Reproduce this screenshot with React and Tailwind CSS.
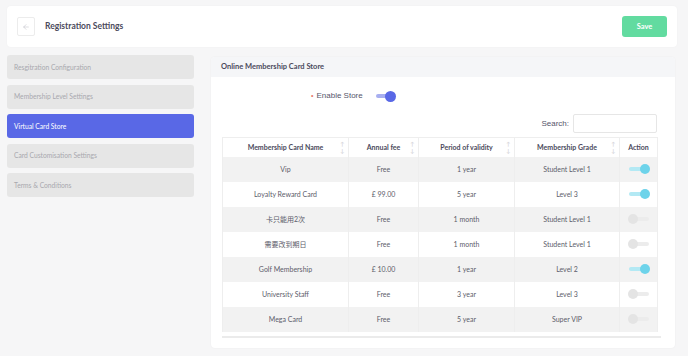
import React from 'react';
import { ArrowLeft } from 'lucide-react';

const menu = [
  { label: 'Resgitration Configuration' },
  { label: 'Membership Level Settings' },
  { label: 'Virtual Card Store', active: true },
  { label: 'Card Customisation Settings' },
  { label: 'Terms & Conditions' },
];

const cards = [
  { name: 'Vip', fee: 'Free', period: '1 year', grade: 'Student Level 1', on: true },
  { name: 'Loyalty Reward Card', fee: '£ 99.00', period: '5 year', grade: 'Level 3', on: true },
  { name: '卡只能用2次', fee: 'Free', period: '1 month', grade: 'Student Level 1', on: false },
  { name: '需要改到期日', fee: 'Free', period: '1 month', grade: 'Student Level 1', on: false },
  { name: 'Golf Membership', fee: '£ 10.00', period: '1 year', grade: 'Level 2', on: true },
  { name: 'University Staff', fee: 'Free', period: '3 year', grade: 'Level 3', on: false },
  { name: 'Mega Card', fee: 'Free', period: '5 year', grade: 'Super VIP', on: false },
];

function SortArrows() {
  return (
    <span className="absolute right-[4px] top-[3px] flex flex-col text-[5.5px] leading-[7px] text-[#d6d6da]">
      <span>↑</span>
      <span>↓</span>
    </span>
  );
}

function RowToggle({ on }) {
  return (
    <div className="relative w-[22px] h-[10px] mx-auto">
      <div className={`absolute left-[1px] right-[1px] top-[3px] h-[4px] rounded-full ${on ? 'bg-[#b3e9f4]' : 'bg-[#ececec]'}`}></div>
      <div className={`absolute top-0 w-[10px] h-[10px] rounded-full ${on ? 'right-0 bg-[#6dd3ea]' : 'left-0 bg-[#e4e4e4]'}`}></div>
    </div>
  );
}

export default function App() {
  return (
    <div className="min-h-[356px] bg-[#f6f6f7] pt-[6px] pl-[7px] font-['Lato',sans-serif] text-[#4b4a5c]">
      <div className="w-[670px]">
        {/* header */}
        <div className="h-[41px] bg-white rounded-[4px] flex items-center justify-between pl-[10px] pr-[10px] shadow-[0_0_2px_rgba(0,0,0,0.04)]">
          <div className="flex items-center gap-[10px]">
            <div className="w-[18px] h-[19px] border border-[#ececec] rounded-[2px] flex items-center justify-center text-[#b8b8c0]">
              <ArrowLeft size={8} strokeWidth={1.5} />
            </div>
            <h1 className="text-[8.5px] font-bold text-[#4b4a5c]">Registration Settings</h1>
          </div>
          <button className="w-[45px] h-[21px] rounded-[3px] bg-[#62dba0] text-white text-[7.5px] font-bold">Save</button>
        </div>

        <div className="flex gap-[17px] mt-[8px]">
          {/* sidebar */}
          <div className="w-[187px] flex flex-col gap-[5.5px]">
            {menu.map((m) => (
              <div
                key={m.label}
                className={`h-[24px] rounded-[3px] flex items-center pl-[7px] text-[6.7px] ${m.active ? 'bg-[#5968e6] text-white' : 'bg-[#e6e6e6] text-[#a8a8ae]'}`}
              >
                {m.label}
              </div>
            ))}
          </div>

          {/* main card */}
          <div className="w-[464px] h-[291px] mt-[2px] bg-white rounded-[4px] shadow-[0_0_2px_rgba(0,0,0,0.06)] overflow-hidden">
            <div className="h-[20px] bg-[#f5f6f8] flex items-center pl-[10px] text-[7.5px] font-bold text-[#4b4a5c]">
              Online Membership Card Store
            </div>
            <div className="flex items-center ml-[100px] mt-[12px] h-[14px] font-['Liberation_Sans',sans-serif]">
              <span className="text-[#e87a6a] text-[7px] mr-[3px]">•</span>
              <span className="text-[8px] text-[#55556a]">Enable Store</span>
              <div className="relative w-[20px] h-[11px] ml-[13px]">
                <div className="absolute left-0 right-[2px] top-[3.5px] h-[4px] rounded-full bg-[#a8aff0]"></div>
                <div className="absolute right-0 top-0 w-[11px] h-[11px] rounded-full bg-[#5968e6]"></div>
              </div>
            </div>
            <div className="flex items-center justify-end mr-[18px] mt-[11px] gap-[4px] font-['Liberation_Sans',sans-serif]">
              <span className="text-[8px] text-[#55556a]">Search:</span>
              <div className="w-[84px] h-[19px] border border-[#e6e6e6] rounded-[2px]"></div>
            </div>
            <div className="ml-[11px] mt-[4px] w-[435px]">
              <table className="w-full border-collapse text-[7px] text-[#5d5d6b] table-fixed">
                <colgroup>
                  <col className="w-[126px]" />
                  <col className="w-[70px]" />
                  <col className="w-[96px]" />
                  <col className="w-[105px]" />
                  <col className="w-[38px]" />
                </colgroup>
                <thead>
                  <tr className="h-[19px] border-t border-[#eeeeee]">
                    {['Membership Card Name', 'Annual fee', 'Period of validity', 'Membership Grade'].map((h) => (
                      <th key={h} className="relative font-bold text-[#4b4a5c] border-x border-[#eeeeee]">
                        {h}
                        <SortArrows />
                      </th>
                    ))}
                    <th className="font-bold text-[#4b4a5c] border-x border-[#eeeeee]">Action</th>
                  </tr>
                </thead>
                <tbody>
                  {cards.map((c, i) => (
                    <tr key={c.name} className={`h-[25px] ${i % 2 === 0 ? 'bg-[#f2f2f2]' : 'bg-white'}`}>
                      <td className="text-center border-x border-[#eeeeee] font-['Lato','Noto_Sans_CJK_SC',sans-serif]">{c.name}</td>
                      <td className="text-center border-x border-[#eeeeee]">{c.fee}</td>
                      <td className="text-center border-x border-[#eeeeee]">{c.period}</td>
                      <td className="text-center border-x border-[#eeeeee]">{c.grade}</td>
                      <td className="border-x border-[#eeeeee]"><RowToggle on={c.on} /></td>
                    </tr>
                  ))}
                </tbody>
              </table>
              <div className="h-[2px] w-[439px] bg-[#ebebeb] mt-[4px]"></div>
            </div>
          </div>
        </div>
      </div>
    </div>
  );
}
